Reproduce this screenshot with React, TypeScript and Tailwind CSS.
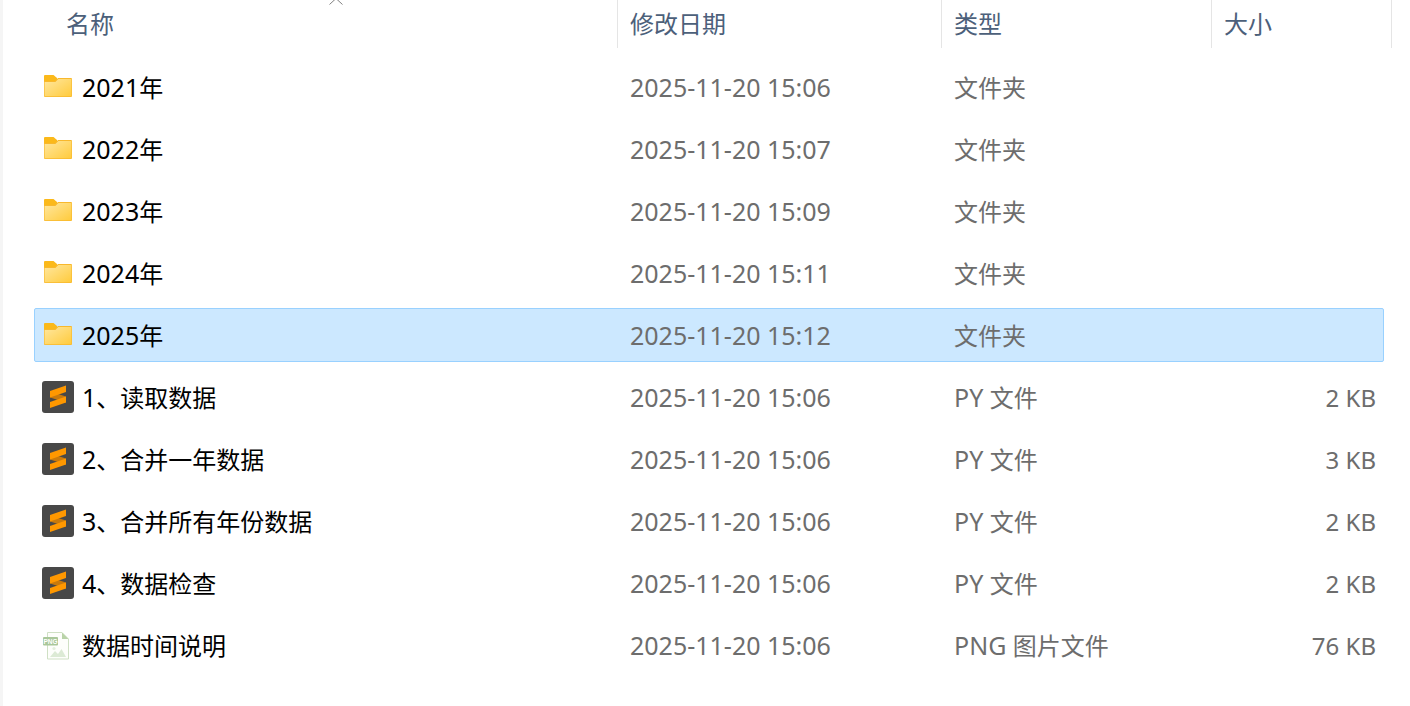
import type { ReactNode } from 'react'

const FONT = "font-['Noto_Sans','Noto_Sans_CJK_SC',sans-serif]"

type FileRow = {
  name: string
  date: string
  kind: string
  size?: string
  icon: 'folder' | 'sublime' | 'png'
  selected?: boolean
}

const rows: FileRow[] = [
  { name: '2021年', date: '2025-11-20 15:06', kind: '文件夹', icon: 'folder' },
  { name: '2022年', date: '2025-11-20 15:07', kind: '文件夹', icon: 'folder' },
  { name: '2023年', date: '2025-11-20 15:09', kind: '文件夹', icon: 'folder' },
  { name: '2024年', date: '2025-11-20 15:11', kind: '文件夹', icon: 'folder' },
  { name: '2025年', date: '2025-11-20 15:12', kind: '文件夹', icon: 'folder', selected: true },
  { name: '1、读取数据', date: '2025-11-20 15:06', kind: 'PY 文件', size: '2 KB', icon: 'sublime' },
  { name: '2、合并一年数据', date: '2025-11-20 15:06', kind: 'PY 文件', size: '3 KB', icon: 'sublime' },
  { name: '3、合并所有年份数据', date: '2025-11-20 15:06', kind: 'PY 文件', size: '2 KB', icon: 'sublime' },
  { name: '4、数据检查', date: '2025-11-20 15:06', kind: 'PY 文件', size: '2 KB', icon: 'sublime' },
  { name: '数据时间说明', date: '2025-11-20 15:06', kind: 'PNG 图片文件', size: '76 KB', icon: 'png' },
]

// latin runs sit slightly larger than the CJK ones, like Segoe UI next to YaHei
function Mixed({ text }: { text: string }) {
  const parts = text.split(/([\u4e00-\u9fff、]+)/).filter(Boolean)
  return (
    <>
      {parts.map((part, i) =>
        /[\u4e00-\u9fff、]/.test(part) ? (
          <span key={i}>{part}</span>
        ) : (
          <span key={i} className="text-[25px]">
            {part}
          </span>
        ),
      )}
    </>
  )
}

function FolderIcon() {
  return (
    <svg width="32" height="32" viewBox="0 0 32 32">
      <defs>
        <linearGradient id="folderFill" x1="0" y1="0" x2="1" y2="1">
          <stop offset="0" stopColor="#ffe79f" />
          <stop offset="1" stopColor="#ffcb3d" />
        </linearGradient>
      </defs>
      <path d="M2 5a1 1 0 0 1 1-1h8.500l3.500 3V10H2z" fill="#fbb91a" />
      <path d="M2 10 13 10 16 7H29a1 1 0 0 1 1 1V25a1 1 0 0 1-1 1H3a1 1 0 0 1-1-1z" fill="#f8b82c" />
      <path d="M2.600 11H13.400L16.400 8H29.400V24.400a.9.9 0 0 1-.9.9H3.500a.9.9 0 0 1-.9-.9z" fill="url(#folderFill)" />
    </svg>
  )
}

function SublimeIcon() {
  return (
    <svg width="32" height="32" viewBox="0 0 32 32">
      <rect width="32" height="32" rx="3" fill="#484848" />
      <path d="M8 10.500 24 15.500V21.500L8 16.500z" fill="#c97a0c" />
      <path d="M24 4.500 8 10V16.500L24 11z" fill="#ff9800" />
      <path d="M24 15.500 8 21V27L24 21.500z" fill="#ff9800" />
    </svg>
  )
}

function PngIcon() {
  return (
    <svg width="32" height="32" viewBox="0 0 32 32">
      <path d="M5.500 3.500H20L26.500 10V30H5.500z" fill="#fdfefb" stroke="#cfe0c4" />
      <path d="M20 3.500V10H26.500z" fill="#b9d3a8" />
      <rect x="1" y="8" width="15" height="8.500" rx="1" fill="#a9c79a" />
      <text x="8.500" y="14.800" textAnchor="middle" fontSize="6.500" fontWeight="700" fill="#fff" fontFamily="Liberation Sans, sans-serif">PNG</text>
      <path d="M8 28 13 22l3 3 3.500-5 4.500 8z" fill="#dcead5" />
      <circle cx="12" cy="19.500" r="1.600" fill="#e3efdc" />
    </svg>
  )
}

const icons: Record<FileRow['icon'], ReactNode> = {
  folder: <FolderIcon />,
  sublime: <SublimeIcon />,
  png: <PngIcon />,
}

function HeaderCell({ label, className, children }: { label: string; className: string; children?: ReactNode }) {
  return (
    <div className={`relative flex h-12 items-center border-r border-[#e5e5e5] ${className}`}>
      {label}
      {children}
    </div>
  )
}

export default function App() {
  return (
    <div className={`${FONT} h-[706px] w-[1410px] overflow-hidden border-l-[3px] border-[#f5f5f5] bg-white text-[24px]`}>
      <div className="flex h-12 text-[#4c607a]">
        <HeaderCell label="名称" className="w-[615px] pl-[63px]">
          <svg className="absolute left-[326px] top-0" width="14" height="6" viewBox="0 0 14 6">
            <path d="M0.500 4.500 7 -1.500 13.500 4.500" fill="none" stroke="#808080" strokeWidth="1" />
          </svg>
        </HeaderCell>
        <HeaderCell label="修改日期" className="w-[324px] pl-3" />
        <HeaderCell label="类型" className="w-[270px] pl-3" />
        <HeaderCell label="大小" className="w-[180px] pl-3" />
      </div>
      <div className="ml-[31px] mt-3 flex w-[1350px] flex-col gap-2">
        {rows.map((row) => (
          <div
            key={row.name}
            className={`flex h-[54px] items-center rounded-[2px] border ${
              row.selected ? 'border-[#99d1ff] bg-[#cce8ff]' : 'border-transparent'
            }`}
          >
            <div className="ml-[7px] flex w-[32px] shrink-0 items-center justify-center">{icons[row.icon]}</div>
            <div className="ml-2 w-[548px] shrink-0 pt-[2px] text-black">
              <Mixed text={row.name} />
            </div>
            <div className="w-[324px] shrink-0 pt-[2px] text-[#6d6d6d]">
              <Mixed text={row.date} />
            </div>
            <div className="w-[270px] shrink-0 pt-[2px] text-[#6d6d6d]">
              <Mixed text={row.kind} />
            </div>
            <div className="w-[152px] shrink-0 pt-[2px] text-right text-[#6d6d6d]">{row.size}</div>
          </div>
        ))}
      </div>
    </div>
  )
}
